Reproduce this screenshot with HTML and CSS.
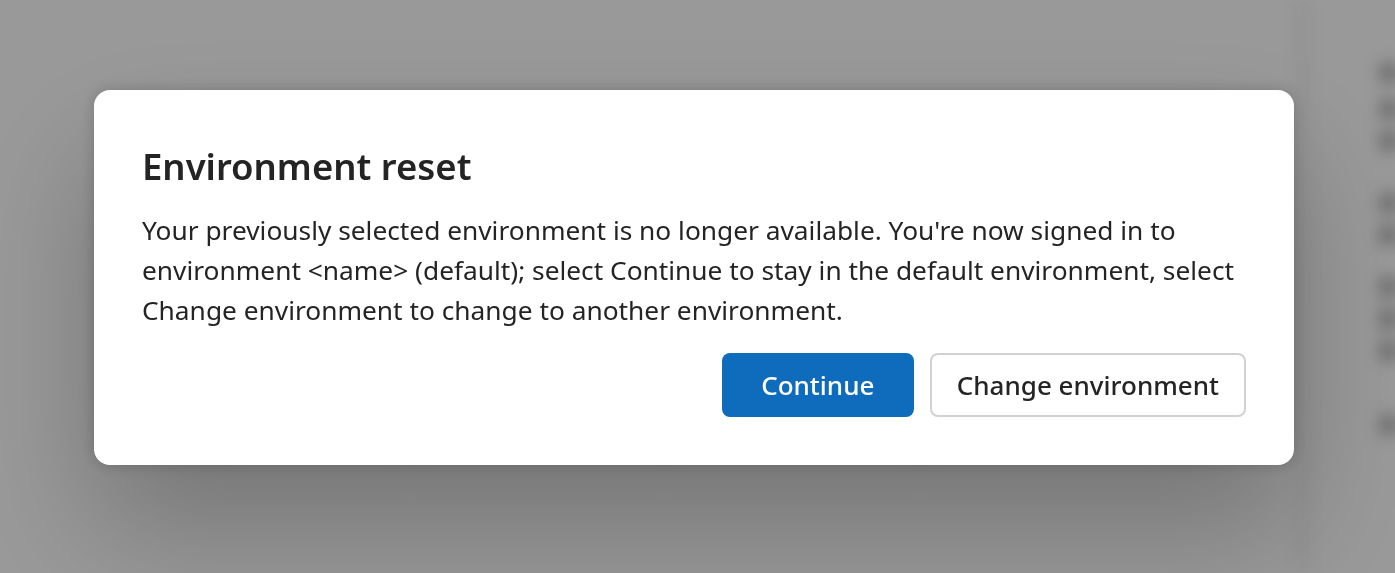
FILE: index.html
```html
<!DOCTYPE html>
<html lang="en">
<head>
<meta charset="utf-8">
<title>Environment reset</title>
<link rel="stylesheet" href="styles.css">
</head>
<body>
<div class="app">
  <div class="app-main"></div>
  <div class="app-side">
    <div class="blur-line l1"></div>
    <div class="blur-line l2"></div>
    <div class="blur-line l3"></div>
    <div class="blur-line l4"></div>
    <div class="blur-line l5"></div>
    <div class="blur-line l6"></div>
    <div class="blur-line l7"></div>
    <div class="blur-line l8"></div>
    <div class="blur-line l9"></div>
  </div>
</div>
<div class="backdrop">
  <div class="dialog" role="dialog" aria-labelledby="dlg-title">
    <h2 class="dialog-title" id="dlg-title">Environment reset</h2>
    <p class="dialog-content">Your previously selected environment is no longer available. You're now signed in to<br>environment &lt;name&gt; (default); select Continue to stay in the default environment, select<br>Change environment to change to another environment.</p>
    <div class="dialog-actions">
      <button class="btn btn-primary" type="button">Continue</button>
      <button class="btn btn-secondary" type="button">Change environment</button>
    </div>
  </div>
</div>
</body>
</html>
```
FILE: styles.css
```css
html, body {
  margin: 0;
  padding: 0;
  height: 100%;
  overflow: hidden;
}
body {
  font-family: "Noto Sans", "Open Sans", "DejaVu Sans", sans-serif;
  background: #ffffff;
}
.app {
  display: flex;
  height: 100%;
  filter: blur(9px);
}
.app-main {
  flex: 1;
  background: #ffffff;
}
.app-side {
  box-sizing: border-box;
  width: 96px;
  background: #ffffff;
  border-left: 8px solid #ececec;
  display: flex;
  flex-direction: column;
  padding-top: 66px;
  padding-left: 76px;
  overflow: hidden;
}
.blur-line {
  flex: none;
  height: 14px;
  width: 40px;
  background: #5e5e5e;
  margin-bottom: 18px;
}
.blur-line.l1 { margin-bottom: 22px; }
.blur-line.l3 { margin-bottom: 48px; }
.blur-line.l5 { margin-bottom: 38px; }
.blur-line.l8 { margin-bottom: 60px; }
.backdrop {
  position: fixed;
  inset: 0;
  background: rgba(0, 0, 0, 0.4);
  display: flex;
  align-items: flex-start;
  padding: 90px 0 0 94px;
}
.dialog {
  box-sizing: border-box;
  width: 1200px;
  background: #ffffff;
  border-radius: 16px;
  padding: 48px;
  box-shadow: 0 64px 128px rgba(0, 0, 0, 0.24), 0 0 16px rgba(0, 0, 0, 0.2);
  color: #242424;
  display: flex;
  flex-direction: column;
}
.dialog-title {
  margin: 0;
  font-size: 36.5px;
  line-height: 56px;
  font-weight: 600;
}
.dialog-content {
  margin: 16px 0 0;
  font-size: 26.3px;
  line-height: 40px;
  font-weight: 400;
}
.dialog-actions {
  margin-top: 23px;
  display: flex;
  justify-content: flex-end;
  gap: 16px;
}
.btn {
  box-sizing: border-box;
  font-family: inherit;
  font-size: 26px;
  line-height: 40px;
  font-weight: 500;
  height: 64px;
  min-width: 192px;
  padding: 10px 24px;
  border-radius: 8px;
  cursor: pointer;
}
.btn-primary {
  background: #0f6cbd;
  color: #ffffff;
  border: 2px solid transparent;
}
.btn-secondary {
  background: #ffffff;
  color: #242424;
  border: 2px solid #d1d1d1;
  padding: 10px 25px;
}
```
